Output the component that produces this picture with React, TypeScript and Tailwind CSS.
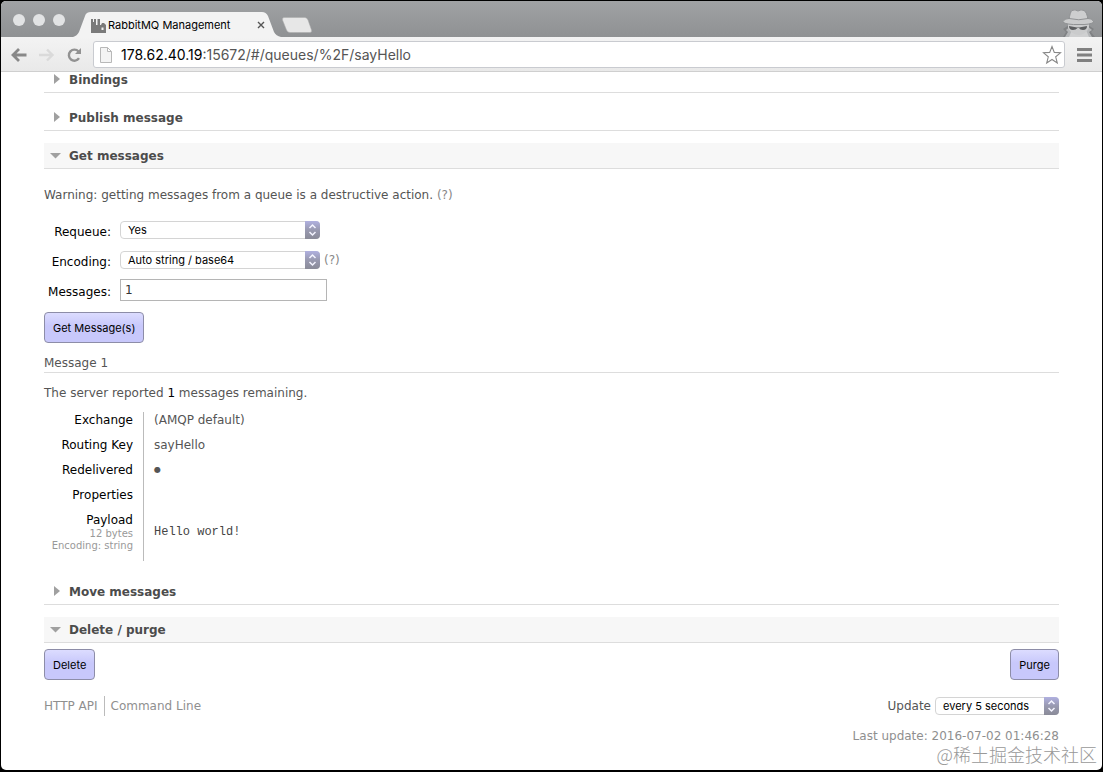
import React, { useState } from "react";

const ui = "font-['Inter',sans-serif]";

function Heading({ title, open = false }: { title: string; open?: boolean }) {
  return (
    <h2
      className={`border-b border-[#dddddd] text-[12px] leading-4 font-bold text-[#4c4c4c] ${open ? "bg-[#f7f7f7]" : ""}`}
    >
      <button type="button" className="flex h-[25px] w-full items-center pt-px text-left" aria-expanded={open}>
        <svg className="mr-2 ml-[6px] shrink-0" width="11" height="12" viewBox="0 0 11 12" fill="#a0a0a0" aria-hidden="true">
          {open ? <path d="M0 3H11L5.500 8.500Z" /> : <path d="M4 0L10 5L4 10Z" />}
        </svg>
        {title}
      </button>
    </h2>
  );
}

function Select({ id, options, className }: { id: string; options: string[]; className: string }) {
  return (
    <span className={`relative inline-flex ${className}`}>
      <select
        id={id}
        className="h-[18px] w-full appearance-none rounded border border-[#d4d4d4] bg-white pr-5 pl-[7px] font-['Inter',sans-serif] text-[11px] leading-4 text-black"
      >
        {options.map((o) => (
          <option key={o}>{o}</option>
        ))}
      </select>
      <svg className="pointer-events-none absolute top-0 right-0" width="15" height="18" viewBox="0 0 15 18" aria-hidden="true">
        <defs>
          <linearGradient id={`${id}-fill`} x1="0" x2="0" y1="0" y2="1">
            <stop offset="0" stopColor="#b0b0e0" />
            <stop offset="0.5" stopColor="#9899b0" />
            <stop offset="1" stopColor="#8a8b98" />
          </linearGradient>
        </defs>
        <path d="M0 0H11Q15 0 15 4V14Q15 18 11 18H0Z" fill={`url(#${id}-fill)`} />
        <path d="M4.5 7L7.5 4L10.5 7M4.5 11L7.5 14L10.5 11" fill="none" stroke="#f4f4ff" strokeWidth="1.5" />
      </svg>
    </span>
  );
}

function ActionButton({ children }: { children: React.ReactNode }) {
  return (
    <button
      type="button"
      className="h-[31px] rounded border border-[#8d8da8] bg-linear-to-b from-[#dcdcff] to-[#c8c8fb] to-45% px-2 font-['Inter',sans-serif] text-[11px] text-black"
    >
      {children}
    </button>
  );
}

function BrowserChrome() {
  const [url, setUrl] = useState("178.62.40.19:15672/#/queues/%2F/sayHello");
  const colon = url.indexOf(":");
  return (
    <header className={ui}>
      <div className="flex h-[36px] items-end bg-linear-to-b from-[#a0a2a4] to-[#8f9193]">
        <div className="flex gap-2 self-center pt-px pl-3">
          {["Close", "Minimize", "Zoom"].map((n) => (
            <button key={n} type="button" aria-label={n} className="size-3 rounded-full bg-[#e2e3e4]" />
          ))}
        </div>
        <div className="relative ml-2 flex h-[25px] w-[208px] items-center">
          <svg className="absolute inset-0" width="208" height="25" viewBox="0 0 208 25" aria-hidden="true">
            <path d="M0 25Q4 24 6 20L12 4Q13 0 18 0H189Q193 0 195 4L201 20Q203 24 208 25Z" fill="#f3f3f3" />
          </svg>
          <div className="relative flex w-full items-center pt-px pl-[18px] text-[11px] text-black">
            <svg width="15" height="15" viewBox="0 0 15 15" fill="#7a7a7a" aria-hidden="true">
              <path d="M0 1H2V4H3V1H5V7H6.500V1H9V7H10L11 5H13L15 7V15H0ZM10.500 9.500V12H12.500V9.500Z" />
            </svg>
            <span className="ml-[2px] grow whitespace-nowrap">RabbitMQ Management</span>
            <button type="button" aria-label="Close tab" className="mr-4">
              <svg width="8" height="8" viewBox="0 0 8 8" stroke="#555" strokeWidth="1.4" aria-hidden="true">
                <path d="M1 1L7 7M7 1L1 7" />
              </svg>
            </button>
          </div>
        </div>
        <button type="button" aria-label="New tab" className="mb-1">
          <svg width="32" height="16" viewBox="0 0 32 16" aria-hidden="true">
            <path d="M3 0.5H24Q26 0.5 27 3L30.5 13Q31 15.5 29 15.5H9Q6.500 15.500 5.500 13L1.500 3Q1 0.500 3 0.500Z" fill="#e7e7e7" stroke="#aaa" strokeWidth="0.5" />
          </svg>
        </button>
        <svg className="mr-[6px] ml-auto" width="35" height="28" viewBox="0 0 35 28" aria-hidden="true">
          <path d="M2 28L5 23L2 20L8 16H27L33 20L30 23L34 28Z" fill="#808284" />
          <path d="M4 28L7 23L5 21L10 17H26L31 21L28 23L31 28Z" fill="#b4b6b8" />
          <path d="M8 28L11 21H25L28 28Z" fill="#cfd0d1" />
          <path d="M7 13H28V19Q24 26 18 26Q11 26 7 19Z" fill="#cacbcc" />
          <path d="M8 11Q9 3 11 1.500Q14 0 17 2Q20 0 23 1.500Q26 3 27 11Q18 14 8 11Z" fill="#cdcecf" stroke="#909294" />
          <path d="M1.500 13Q4 9 8 9.500Q18 12 27 9.500Q31 9 33 13Q29 16 18 15.500Q6 16 1.500 13Z" fill="#cacbcc" stroke="#909294" />
          <path d="M8 17L16 18.500H18L26 17Q26 21 22 21Q19 21 18 19H16.500Q15 21 12 21Q8 21 8 17Z" fill="#5c5e60" />
        </svg>
      </div>
      <div className="flex h-[35px] items-center border-b border-[#cfcfcf] bg-linear-to-b from-[#f3f3f3] to-[#e9e9e9] pt-px pr-[9px] pl-[9px]">
        <button type="button" aria-label="Back">
          <svg width="18" height="16" viewBox="0 0 18 16" fill="none" stroke="#888" strokeWidth="2.8" aria-hidden="true">
            <path d="M16.500 8H3M9 2L3 8L9 14" />
          </svg>
        </button>
        <button type="button" aria-label="Forward" className="ml-[10px]">
          <svg width="18" height="16" viewBox="0 0 18 16" fill="none" stroke="#dadada" strokeWidth="2.4" aria-hidden="true">
            <path d="M1 8H14M9 2.500L14.500 8L9 13.500" />
          </svg>
        </button>
        <button type="button" aria-label="Reload" className="ml-[10px]">
          <svg width="16" height="16" viewBox="0 0 16 16" fill="none" stroke="#929292" strokeWidth="2.4" aria-hidden="true">
            <path d="M13 11.200A5.500 5.500 0 1 1 12.500 4.500" />
            <path d="M15 1V7H9Z" fill="#929292" stroke="none" />
          </svg>
        </button>
        <div className="ml-[11px] flex h-[27px] grow items-center rounded-[3px] border border-[#c9cbd0] bg-white px-[6px]">
          <svg width="12" height="16" viewBox="0 0 12 16" fill="#f4f4f4" stroke="#b8b8b8" aria-hidden="true">
            <path d="M0.500 0.500H7.500L11.500 4.500V15.500H0.500ZM7.500 0.500V4.500H11.500" />
          </svg>
          <div className="relative ml-[9px] grow text-[14px] leading-5">
            <div className="text-[#555]" aria-hidden="true">
              <span className="text-black">{url.slice(0, colon)}</span>
              {url.slice(colon)}
            </div>
            <input
              aria-label="Address"
              value={url}
              onChange={(e) => setUrl(e.target.value)}
              className="absolute inset-0 w-full bg-transparent text-transparent caret-black outline-none"
            />
          </div>
          <button type="button" aria-label="Bookmark">
            <svg className="-mr-[4px]" width="20" height="20" viewBox="0 0 20 20" fill="#fff" stroke="#888" strokeWidth="1.100" aria-hidden="true">
              <path d="M10 1.500L12.300 7.400L18.500 7.800L13.700 11.800L15.300 18L10 14.500L4.700 18L6.300 11.800L1.500 7.800L7.700 7.400Z" />
            </svg>
          </button>
        </div>
        <button type="button" aria-label="Menu" className="ml-[11px]">
          <svg width="17" height="14" viewBox="0 0 17 14" fill="#808080" aria-hidden="true">
            <path d="M1 0H16V3H1ZM1 5.500H16V8.500H1ZM1 11H16V14H1Z" />
          </svg>
        </button>
      </div>
    </header>
  );
}

const th = "w-[100px] border-r border-[#bbbbbb] pr-[10px] text-right align-top font-normal text-black";
const td = "pl-[10px] align-top";

const details = [
  ["Exchange", "(AMQP default)"],
  ["Routing Key", "sayHello"],
  ["Redelivered", "●"],
  ["Properties", ""],
];

export default function App() {
  return (
    <div className="min-h-screen bg-black pt-px pr-px pb-[2px] pl-px">
      <div className="relative flex min-h-[calc(100vh-3px)] flex-col overflow-hidden rounded-[5px] bg-white">
        <BrowserChrome />
        <main className="px-[43px] font-['DejaVu_Sans',sans-serif] text-[12px] leading-4 text-[#555555]">
          <div className="-mt-[5px]">
            <Heading title="Bindings" />
          </div>
          <div className="mt-3">
            <Heading title="Publish message" />
          </div>
          <section className="mt-3">
            <Heading title="Get messages" open />
            <p className="mt-[18px]">
              Warning: getting messages from a queue is a destructive action.{" "}
              <button type="button" className="text-[#888888]">(?)</button>
            </p>
            <form className="mt-3" onSubmit={(e) => e.preventDefault()}>
              <div className="flex h-[30px] items-center">
                <label htmlFor="requeue" className="w-[67px] pt-[3px] text-right text-black">Requeue:</label>
                <Select id="requeue" options={["Yes", "No"]} className="ml-[9px] w-[200px]" />
              </div>
              <div className="flex h-[30px] items-center">
                <label htmlFor="encoding" className="w-[67px] pt-[3px] text-right text-black">Encoding:</label>
                <Select id="encoding" options={["Auto string / base64", "base64"]} className="ml-[9px] w-[200px]" />
                <button type="button" className="ml-1 text-[#888888]">(?)</button>
              </div>
              <div className="flex h-[30px] items-center">
                <label htmlFor="count" className="w-[67px] pt-[3px] text-right text-black">Messages:</label>
                <input
                  id="count"
                  type="text"
                  defaultValue="1"
                  className="ml-[9px] h-[22px] w-[207px] border border-[#b5b5b5] px-1 text-[12px] text-[#333333]"
                />
              </div>
              <div className="mt-[7px] flex">
                <ActionButton>Get Message(s)</ActionButton>
              </div>
            </form>
            <h3 className="mt-3 border-b border-[#dddddd] pb-px">Message 1</h3>
            <p className="mt-3">
              The server reported <b className="font-normal text-black">1</b> messages remaining.
            </p>
            <table className="mt-[11px] border-separate border-spacing-0">
              <tbody>
                {details.map(([name, value]) => (
                  <tr key={name} className="h-[25px]">
                    <th scope="row" className={th}>{name}</th>
                    <td className={`${td} ${value === "●" ? "text-[8px]" : ""}`}>{value}</td>
                  </tr>
                ))}
                <tr className="h-[49px]">
                  <th scope="row" className={th}>
                    Payload
                    <span className="block text-[10px] leading-3 text-[#999999]">12 bytes</span>
                    <span className="block text-[10px] leading-3 whitespace-nowrap text-[#999999]">Encoding: string</span>
                  </th>
                  <td className={td}>
                    <pre className="mt-3 font-['Liberation_Mono',monospace] text-[12px] leading-4 text-[#444444]">Hello world!</pre>
                  </td>
                </tr>
              </tbody>
            </table>
          </section>
          <div className="mt-[18px]">
            <Heading title="Move messages" />
          </div>
          <section className="mt-3">
            <Heading title="Delete / purge" open />
            <div className="mt-[6px] flex justify-between">
              <ActionButton>Delete</ActionButton>
              <ActionButton>Purge</ActionButton>
            </div>
          </section>
          <footer className="mt-4 text-[#8f8f8f]">
            <div className="flex items-center justify-between">
              <nav className="flex leading-5">
                <a href="#/api" className="border-r border-[#bbbbbb] pr-[6px]">HTTP API</a>
                <a href="#/cli" className="pl-[6px]">Command Line</a>
              </nav>
              <div className="flex items-center">
                <label htmlFor="update" className="text-[#555555]">Update</label>
                <Select id="update" options={["every 5 seconds", "every 30 seconds"]} className="ml-1 w-[124px]" />
              </div>
            </div>
            <p className="mt-3 text-right">Last update: 2016-07-02 01:46:28</p>
          </footer>
        </main>
        <p className="absolute right-[5px] bottom-[6px] font-['Noto_Sans_CJK_SC',sans-serif] text-[18px] leading-5 font-light text-[#999999]">
          @稀土掘金技术社区
        </p>
      </div>
    </div>
  );
}
